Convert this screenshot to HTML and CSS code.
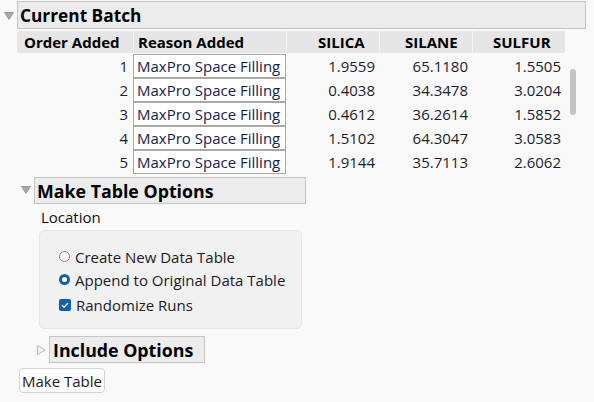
FILE: index.html
```html
<!DOCTYPE html>
<html>
<head>
<meta charset="utf-8">
<link rel="stylesheet" href="styles.css">
</head>
<body>
<div class="page">
  <div class="outline top">
    <svg class="tri" width="10" height="8" viewBox="0 0 10 8"><path d="M0.5 0.5 H9.5 L5 7.5 Z" fill="#a8a8a8" stroke="#8c8c8c" stroke-width="0.8"/></svg>
    <div class="title wide">Current Batch</div>
  </div>
  <div class="batch">
    <div class="grid">
      <div class="hc c1">Order Added</div>
      <div class="hc c2">Reason Added</div>
      <div class="hc c3">SILICA</div>
      <div class="hc c4">SILANE</div>
      <div class="hc c5">SULFUR</div>

      <div class="num ord">1</div><div class="reason">MaxPro Space Filling</div><div class="num">1.9559</div><div class="num">65.1180</div><div class="num">1.5505</div>
      <div class="num ord">2</div><div class="reason">MaxPro Space Filling</div><div class="num">0.4038</div><div class="num">34.3478</div><div class="num">3.0204</div>
      <div class="num ord">3</div><div class="reason">MaxPro Space Filling</div><div class="num">0.4612</div><div class="num">36.2614</div><div class="num">1.5852</div>
      <div class="num ord">4</div><div class="reason">MaxPro Space Filling</div><div class="num">1.5102</div><div class="num">64.3047</div><div class="num">3.0583</div>
      <div class="num ord">5</div><div class="reason">MaxPro Space Filling</div><div class="num">1.9144</div><div class="num">35.7113</div><div class="num">2.6062</div>
    </div>
    <div class="scroll"><div class="thumb"></div></div>
  </div>

  <div class="outline mto">
    <svg class="tri" width="10" height="8" viewBox="0 0 10 8"><path d="M0.5 0.5 H9.5 L5 7.5 Z" fill="#a8a8a8" stroke="#8c8c8c" stroke-width="0.8"/></svg>
    <div class="title mto-title">Make Table Options</div>
  </div>
  <div class="mto-body">
    <div class="label">Location</div>
    <div class="panel">
      <label class="opt"><span class="radio"></span>Create New Data Table</label>
      <label class="opt"><span class="radio on"></span>Append to Original Data Table</label>
      <label class="opt chk-row"><span class="check"><svg width="12" height="12" viewBox="0 0 12 12"><path d="M3 6.2 L5.1 8.2 L9 4" fill="none" stroke="#fff" stroke-width="1.3"/></svg></span>Randomize Runs</label>
    </div>
    <div class="outline inc">
      <svg class="tri-r" width="9" height="10" viewBox="0 0 9 10"><path d="M0.5 0.5 L8.3 5 L0.5 9.5 Z" fill="#f4f4f4" stroke="#b4b4b4" stroke-width="0.9"/></svg>
      <div class="title inc-title">Include Options</div>
    </div>
  </div>
  <div class="btn-row"><button class="btn">Make Table</button></div>
</div>
</body>
</html>
```
FILE: styles.css
```css
* { box-sizing: border-box; }
html, body { margin: 0; padding: 0; }
body {
  background: #f9f9f9;
  font-family: "Open Sans", "Noto Sans", sans-serif;
  font-size: 15px;
  color: #1a1a2a;
  width: 594px;
  height: 402px;
  overflow: hidden;
}
.page { padding-top: 1px; }

.outline { display: flex; align-items: center; }
.tri { flex: none; }
.title {
  background: #ececec;
  border: 1px solid #c4c4c4;
  font-weight: 700;
  font-size: 17px;
  color: #000;
  display: flex;
  align-items: center;
}
.top { padding-left: 4px; }
.top .tri { margin-right: 3px; margin-top: 1px; }
.wide { width: 569px; height: 28px; padding-left: 2px; font-size: 17.3px; }

.batch { position: relative; padding-left: 17px; margin-top: 2px; }
.grid {
  display: grid;
  grid-template-columns: 116px 153px 93px 93px 93px;
  grid-auto-rows: 24px;
  grid-template-rows: 23px;
  width: 548px;
}
.hc {
  background: #e6e6e6;
  font-weight: 700;
  font-size: 15px;
  color: #000;
  display: flex;
  align-items: center;
  border-left: 1px solid #f4f4f4;
  height: 22px;
}
.c1 { border-left: none; padding-left: 7px; }
.c2 { padding-left: 4px; }
.c3 { padding-left: 31px; }
.c4 { padding-left: 25px; }
.c5 { padding-left: 20px; }

.num {
  display: flex;
  align-items: center;
  justify-content: flex-end;
  padding-right: 4px;
  height: 23px;
  color: #1c1c2c;
}
.ord { padding-right: 5px; }
.reason {
  background: #fff;
  border: 1px solid #a8a8a8;
  height: 24px;
  padding-left: 3px;
  display: flex;
  align-items: center;
  color: #12224c;
  white-space: nowrap;
}
.scroll { position: absolute; left: 570px; top: 38px; width: 6px; height: 46px; }
.thumb { width: 6px; height: 46px; background: #c4c4c4; border-radius: 3px; }

.mto { padding-left: 21px; margin-top: 3px; }
.mto .tri { margin-right: 3px; margin-top: -1px; }
.mto-title { width: 272px; height: 27px; padding-left: 2px; font-size: 17.8px; }

.mto-body { padding-left: 39px; }
.label { padding-left: 2px; height: 26px; display: flex; align-items: center; color: #111; }
.panel {
  width: 263px;
  height: 99px;
  background: #f1f1f1;
  border: 1px solid #e6e6e6;
  border-radius: 5px;
  padding: 14px 0 0 19px;
  display: flex;
  flex-direction: column;
}
.opt { display: flex; align-items: center; height: 23px; color: #1a1a2a; }
.chk-row { height: 26px; margin-top: 1px; }
.radio {
  width: 11px; height: 11px;
  border: 1px solid #8a8a8a;
  border-radius: 50%;
  background: #fafafa;
  margin-right: 5px;
  flex: none;
}
.radio.on { border: 3px solid #0a5fb8; background: #fff; }
.check {
  width: 12px; height: 12px;
  background: #0a5fb8;
  border-radius: 2px;
  margin-right: 5px;
  flex: none;
  display: flex;
}
.inc { margin-top: 7px; margin-left: -2px; }
.tri-r { margin-right: 3px; }
.inc-title { width: 156px; height: 27px; padding-left: 3px; font-size: 17.8px; }

.btn-row { padding-left: 19px; margin-top: 5px; }
.btn {
  font-family: inherit;
  font-size: 15px;
  color: #1a1a2a;
  background: #fdfdfd;
  border: 1px solid #d4d4d4;
  border-radius: 4px;
  width: 86px;
  height: 25px;
  padding: 0;
}
```
